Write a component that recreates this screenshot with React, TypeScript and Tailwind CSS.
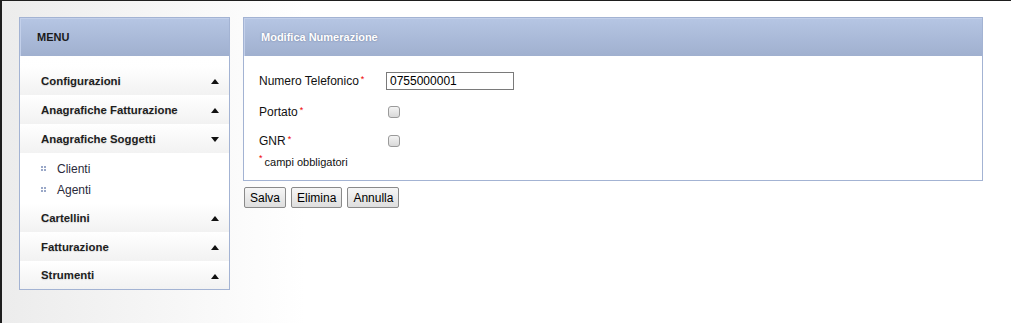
import React from "react";

const font = { fontFamily: '"Liberation Sans", Arial, sans-serif' };

function Arrow({ up }: { up: boolean }) {
  return (
    <svg width="8" height="5" viewBox="0 0 8 5" className="block">
      {up ? <polygon points="0,5 8,5 4,0" fill="#111" /> : <polygon points="0,0 8,0 4,5" fill="#111" />}
    </svg>
  );
}

function Dots() {
  return (
    <svg width="5" height="5" viewBox="0 0 5 5" className="block">
      <rect x="0" y="0" width="2" height="2" fill="#9aa8c8" />
      <rect x="3" y="0" width="2" height="2" fill="#9aa8c8" />
      <rect x="0" y="3" width="2" height="2" fill="#9aa8c8" />
      <rect x="3" y="3" width="2" height="2" fill="#9aa8c8" />
    </svg>
  );
}

function MenuRow({ label, up, last }: { label: string; up: boolean; last?: boolean }) {
  return (
    <div
      className={
        (last ? "h-[28px] " : "h-[29px] ") +
        "pt-[2px] flex items-center justify-between pl-[21px] pr-[10px] bg-linear-to-b from-white to-[#f2f2f2]"
      }
    >
      <span className="text-[11.4px] font-bold text-[#1e1e1e] [text-shadow:0_1px_1px_#d8d8d8]">{label}</span>
      <Arrow up={up} />
    </div>
  );
}

function SubRow({ label }: { label: string }) {
  return (
    <div className="h-[21px] flex items-center pl-[21px] gap-[11px]">
      <Dots />
      <span className="text-[12px] text-[#2a2a3a]">{label}</span>
    </div>
  );
}

function Header({ children }: { children: React.ReactNode }) {
  return (
    <div className="h-[38px] flex items-center bg-linear-to-b from-[#b5c5e3] to-[#a0b0cf] border-t border-l border-[#c3d0ea]">
      {children}
    </div>
  );
}

function Req() {
  return <span className="text-[#e00] text-[9px] relative top-[-3px] ml-[2px]">*</span>;
}

function Checkbox() {
  return (
    <span className="block w-[12px] h-[12px] rounded-[3px] border border-[#9a9a9a] bg-linear-to-b from-[#f4f4f4] to-[#d9d9d9]" />
  );
}

function Btn({ label }: { label: string }) {
  return (
    <button className="h-[21px] px-[5px] text-[12px] text-black border border-[#8a8a8a] rounded-[2px] bg-linear-to-b from-[#f6f6f6] to-[#dedede] leading-none">
      {label}
    </button>
  );
}

export default function App() {
  return (
    <div
      style={font}
      className="w-[1011px] h-[323px] overflow-hidden border-t border-l-2 border-[#1e1e1e] bg-linear-to-r from-[#ececec] to-white to-30% flex items-start pt-[16px] pl-[17px] gap-[13px]"
    >
      <div className="w-[211px] border border-[#a3b3d3] bg-white">
        <Header>
          <span className="pl-[16px] text-[11px] font-bold text-[#1a1a1a]">MENU</span>
        </Header>
        <div className="pt-[10px] bg-linear-to-b from-white to-[#f7f7f7]">
          <MenuRow label="Configurazioni" up />
          <MenuRow label="Anagrafiche Fatturazione" up />
          <MenuRow label="Anagrafiche Soggetti" up={false} />
          <div className="pt-[5px] pb-[3px] bg-white">
            <SubRow label="Clienti" />
            <SubRow label="Agenti" />
          </div>
          <MenuRow label="Cartellini" up />
          <MenuRow label="Fatturazione" up />
          <MenuRow label="Strumenti" up last />
        </div>
      </div>

      <div className="flex flex-col">
        <div className="w-[740px] border border-[#a3b3d3] bg-white">
          <Header>
            <span className="pl-[16px] text-[11px] font-bold text-white [text-shadow:0_0_2px_#6b7a99]">
              Modifica Numerazione
            </span>
          </Header>
          <div className="pt-[16px] pb-[11px] px-[15px] text-[12px] text-[#111]">
            <div className="flex items-center h-[18px]">
              <span className="w-[127px]">
                Numero Telefonico
                <Req />
              </span>
              <div className="w-[128px] h-[18px] border border-[#7a7a7a] bg-white flex items-center px-[3px] text-[12px] text-black">
                0755000001
              </div>
            </div>
            <div className="flex items-center h-[12px] mt-[16px]">
              <span className="w-[129px]">
                Portato
                <Req />
              </span>
              <Checkbox />
            </div>
            <div className="flex items-center h-[12px] mt-[17px]">
              <span className="w-[129px]">
                GNR
                <Req />
              </span>
              <Checkbox />
            </div>
            <div className="mt-[8px] h-[14px] text-[11px] flex items-center">
              <span className="text-[#e00] text-[9px] relative top-[-3px] mr-[2px]">*</span>
              campi obbligatori
            </div>
          </div>
        </div>
        <div className="flex gap-[5px] mt-[6px] pl-[1px]">
          <Btn label="Salva" />
          <Btn label="Elimina" />
          <Btn label="Annulla" />
        </div>
      </div>
    </div>
  );
}
